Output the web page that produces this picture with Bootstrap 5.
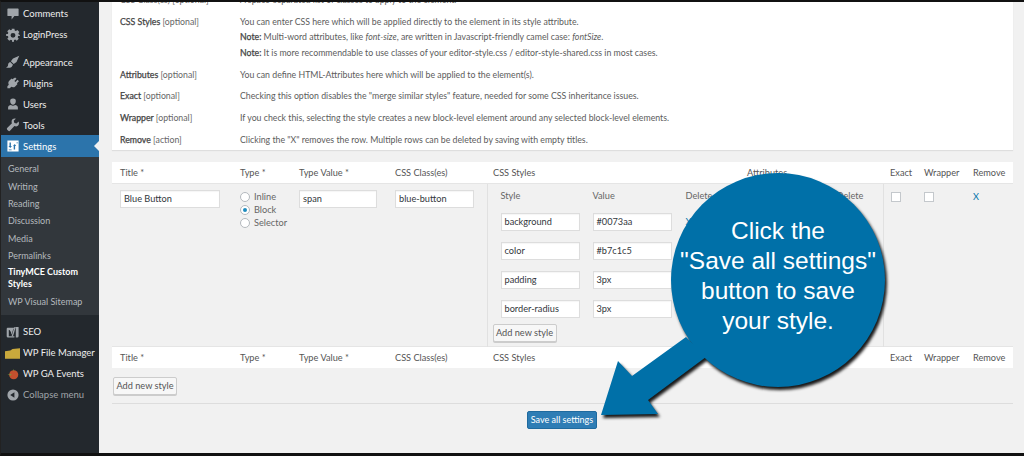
<!DOCTYPE html>
<html lang="en"><head><meta charset="utf-8"><title>TinyMCE Custom Styles</title>
<link href="https://cdn.jsdelivr.net/npm/bootstrap@5.3.0/dist/css/bootstrap.min.css" rel="stylesheet">
<style>
html,body{height:100%;overflow:hidden}
body{font-family:Lato,"Open Sans","Liberation Sans",sans-serif;font-size:9.2px;line-height:13px;color:#444;background:#f1f1f1}
.frame{width:1024px;height:456px;border-top:2px solid #111;border-bottom:3px solid #111;border-left:1px solid #222;position:relative;overflow:hidden}
.side{width:98px;background:#23282d;color:#eee;flex:none;padding-top:1px}
.menu-i{height:21px;padding-left:22px;position:relative;display:flex;align-items:center;font-size:9.5px;white-space:nowrap}
.menu-i svg{position:absolute;left:5px;top:3.5px;width:14px;height:14px;fill:#a0a5aa}
.menu-i.gap1{margin-top:6.5px}
.menu-i.gap2{margin-top:6px}
.menu-i.dim{color:#a0a5aa}
.menu-i.on{background:#2c74ab;color:#fff;height:22px;margin-top:-.5px}
.menu-i.on svg{fill:#fff}
.menu-i.on::after{content:"";position:absolute;right:0;top:6px;border:5px solid transparent;border-right-color:#f1f1f1;border-left:0}
.menu-i svg.bigger{left:4px;width:15px;height:15px}
.sub{background:#32373c;padding:3px 0 5px;color:#b4b9be;font-size:9px}
.sub div{padding:2.2px 7px;line-height:13px}
.sub .cur{color:#fff;font-weight:700;line-height:12px}
.main{flex:1;min-width:0;padding:0 11px 0 13px}
.panel1{background:#fff;box-shadow:0 1px 1px rgba(0,0,0,.08);margin-top:-9px;height:157px;color:#5c5c5c;font-size:8.75px}
.opt{display:flex;padding:0 8px}
.opt .k{width:120px;flex:none;color:#666}
.opt b{font-weight:400;color:#444;-webkit-text-stroke:.25px #444}
.opt p{margin:0 0 2.2px;line-height:13.3px}
.opt.mb9{margin-bottom:8.7px}
.opt.mb7{margin-bottom:6.6px}
.gridt{margin-top:12px;width:901px;table-layout:fixed;border-collapse:collapse;background:#f1f1f1}
.gridt th{background:#fff;font-weight:400;height:21.5px;padding:0 0 0 8px;color:#555;white-space:nowrap;overflow:visible;vertical-align:middle}
.gridt th.nar{padding-left:7px}
.gridt th.stylesh{padding-left:6px}
.gridt thead th{border-bottom:1px solid #e5e5e5}
.gridt tfoot th{border-top:1px solid #e5e5e5}
.gridt td{vertical-align:top;padding:6px 0 0 8px;height:163px}
.gridt td.nar{padding-left:7px}
.gridt td.radc{padding-top:6px}
.gridt td.ss{border-left:1px solid #e1e1e1;border-right:1px solid #e1e1e1;padding:0 0 0 5px}
.fld{display:block;height:18px;background:#fff;border:1px solid #ddd;box-shadow:inset 0 1px 1px rgba(0,0,0,.04);padding:0 3px;line-height:16px;color:#32373c}
.w100{width:100px}.w78{width:78px}.w79{width:79px}
.radline{height:13px;display:flex;align-items:center;gap:4px;color:#666}
.rad{width:10px;height:10px;border-radius:50%;background:#fff;border:1px solid #b4b9be;display:flex;align-items:center;justify-content:center;flex:none}
.rad i{width:4px;height:4px;border-radius:50%;background:#1e8cbe}
.chk{display:block;width:10px;height:10px;background:#fff;border:1px solid #c4c8cc;margin-top:2px}
.lnk{color:#0073aa;line-height:13px;display:block}
.subg{display:grid;grid-template-columns:92px 93px 61px 90px 1fr;padding-left:8px;color:#666;padding-top:5px;height:29px}
.subf{display:grid;grid-template-columns:92px 93px 61px;padding-left:8px;height:29px;align-items:start}
.subf .fld{width:79px}
.xmark{color:#0073aa;padding-top:2px}
.hattr{width:254px}
.wbtn{display:inline-block;width:64px;height:18px;border:1px solid #ccc;background:#f7f7f7;box-shadow:0 1px 0 #ccc;border-radius:2px;line-height:16px;text-align:center;color:#555}
.addin{margin-top:-5px}
.addout{margin:9px 0 0 1px;line-height:0}
.hrl{border-top:1px solid #ddd;margin:8px 0 7px;width:901px}
.savebtn{width:70px;height:18px;background:#2e7db5;border:1px solid #1f6a9e;border-radius:2px;color:#fff;font-size:9px;line-height:16px;text-align:center;margin-left:415px}
.callout{position:absolute;left:590px;top:165px;width:310px;height:265px;pointer-events:none}
.callout svg{display:block;filter:drop-shadow(2px 3px 1.5px rgba(0,0,0,.9))}
.calltxt{position:absolute;left:67px;top:48.500px;width:240px;text-align:center;font-family:"Liberation Sans",Arial,sans-serif;font-size:24.500px;line-height:30.300px;color:#fff}
</style></head><body>
<div class="frame d-flex">
<nav class="side">
<div class="menu-i"><svg viewBox="0 0 20 20"><path d="M3 2h14a1 1 0 0 1 1 1v9a1 1 0 0 1-1 1h-5l-4 5v-5H3a1 1 0 0 1-1-1V3a1 1 0 0 1 1-1z"/></svg>Comments</div>
<div class="menu-i"><svg viewBox="0 0 20 20"><path d="M8 1h4l.5 2.600 1.600.7 2.200-1.500 2.800 2.800-1.500 2.200.7 1.600L20 10v1l-2.600.5-.7 1.600 1.500 2.200-2.800 2.800-2.200-1.500-1.600.7L11 20H9l-.5-2.600-1.600-.7-2.200 1.500-2.800-2.800 1.500-2.200-.7-1.600L0 11V9l2.600-.5.7-1.600L1.800 4.600l2.800-2.800 2.200 1.500 1.600-.7zM10 7a3.500 3.500 0 1 0 0 7 3.500 3.500 0 0 0 0-7z" fill-rule="evenodd"/></svg>LoginPress</div>
<div class="menu-i gap1"><svg viewBox="0 0 20 20"><path d="M19 1l-9 4-3 4 4 4 4-3zM6 10l4 4-2 3c-2 1.500-5 1.500-8 1 2-1 3-2 3-4 0-2 1-3 3-4z"/></svg>Appearance</div>
<div class="menu-i"><svg viewBox="0 0 20 20"><path d="M13 2l2 2-3 3 1.500 1.500 3-3 2 2-3 3 1 1-3 3c-2 2-4 2-6 1l-2 2H2v-3l2-2c-1-2-1-4 1-6l3-3 1 1z"/></svg>Plugins</div>
<div class="menu-i"><svg viewBox="0 0 20 20"><path d="M10 2a4 4 0 0 1 4 4.500C14 9 12 11 10 11S6 9 6 6.500A4 4 0 0 1 10 2zM3 18v-3c0-2 2-3 4-3.500 2 1.500 4 1.500 6 0 2 .5 4 1.500 4 3.500v3z"/></svg>Users</div>
<div class="menu-i"><svg viewBox="0 0 20 20"><path d="M18 5l-3 3-3-1-1-3 3-3c-3-1-6 1-6 4 0 1 0 2 .5 2.500L2 14c-1 1-1 2 0 3l1 1c1 1 2 1 3 0l6-6.500c.5.500 1.500.5 2.500.5 3 0 5-3 3.500-7z"/></svg>Tools</div>
<div class="menu-i on"><svg viewBox="0 0 20 20"><path fill-rule="evenodd" d="M2 2h16v16H2zM5 5v5H3.500l2.500 3 2.500-3H7V5zm6 10h2V10h1.500L12.500 7 10 10h1zM15 5h2v1h-2zM4 15h4v1H4z"/></svg>Settings</div>
<div class="sub"><div>General</div><div>Writing</div><div>Reading</div><div>Discussion</div><div>Media</div><div>Permalinks</div><div class="cur">TinyMCE Custom<br>Styles</div><div>WP Visual Sitemap</div></div>
<div class="menu-i gap2"><svg viewBox="0 0 20 20"><path d="M2 4h10l-2 3-2 7-1-4-2-3H4v9h8v2H3a2 2 0 0 1-2-2V5zM14 3h4v13a2 2 0 0 1-2 2h-2z"/><path d="M12 3h2l-4 13H8z"/></svg>SEO</div>
<div class="menu-i"><svg class="bigger" viewBox="0 0 20 20"><path fill="#c9a93c" d="M0 7l7-1 3-2 10-1v14H0z"/></svg>WP File Manager</div>
<div class="menu-i"><svg viewBox="0 0 20 20"><circle cx="11" cy="11" r="6.500" fill="#c2502e"/><path fill="#7a9a3c" d="M2 11l6-1-1 2zM10 3l2 2-1 1z"/></svg>WP GA Events</div>
<div class="menu-i dim"><svg viewBox="0 0 20 20"><path fill-rule="evenodd" d="M10 2a8 8 0 1 1 0 16 8 8 0 0 1 0-16zm2 4l-6 4 6 4z"/></svg>Collapse menu</div>
</nav>
<main class="main">
<section class="panel1">
<div class="opt mb9"><div class="k">CSS Class(es) [optional]</div><div>A space-separated list of classes to apply to the element.</div></div>
<div class="opt mb7"><div class="k"><b>CSS Styles</b> [optional]</div><div><p>You can enter CSS here which will be applied directly to the element in its style attribute.</p><p><b>Note:</b> Multi-word attributes, like <i>font-size</i>, are written in Javascript-friendly camel case: <i>fontSize</i>.</p><p><b>Note:</b> It is more recommendable to use classes of your editor-style.css / editor-style-shared.css in most cases.</p></div></div>
<div class="opt mb9"><div class="k"><b>Attributes</b> [optional]</div><div>You can define HTML-Attributes here which will be applied to the element(s).</div></div>
<div class="opt mb9"><div class="k"><b>Exact</b> [optional]</div><div>Checking this option disables the "merge similar styles" feature, needed for some CSS inheritance issues.</div></div>
<div class="opt mb9"><div class="k"><b>Wrapper</b> [optional]</div><div>If you check this, selecting the style creates a new block-level element around any selected block-level elements.</div></div>
<div class="opt"><div class="k"><b>Remove</b> [action]</div><div>Clicking the "X" removes the row. Multiple rows can be deleted by saving with empty titles.</div></div>
</section>
<table class="gridt">
<colgroup><col style="width:120px"><col style="width:59px"><col style="width:96px"><col style="width:100px"><col style="width:396px"><col style="width:34px"><col style="width:49px"><col style="width:47px"></colgroup>
<thead><tr><th>Title *</th><th>Type *</th><th>Type Value *</th><th>CSS Class(es)</th><th class="stylesh"><div class="d-flex"><span class="hattr">CSS Styles</span><span>Attributes</span></div></th><th class="nar">Exact</th><th class="nar">Wrapper</th><th class="nar">Remove</th></tr></thead>
<tbody><tr>
<td><span class="fld w100">Blue Button</span></td>
<td class="radc"><div class="radline"><span class="rad"></span>Inline</div><div class="radline"><span class="rad"><i></i></span>Block</div><div class="radline"><span class="rad"></span>Selector</div></td>
<td><span class="fld w78">span</span></td>
<td><span class="fld w79">blue-button</span></td>
<td class="ss">
<div class="subg"><span>Style</span><span>Value</span><span>Delete</span><span>Attribute</span><span>Delete</span></div>
<div class="subf"><span class="fld">background</span><span class="fld">#0073aa</span><span class="xmark">X</span></div>
<div class="subf"><span class="fld">color</span><span class="fld">#b7c1c5</span><span class="xmark">X</span></div>
<div class="subf"><span class="fld">padding</span><span class="fld">3px</span><span class="xmark">X</span></div>
<div class="subf"><span class="fld">border-radius</span><span class="fld">3px</span><span class="xmark">X</span></div>
<div class="addin"><span class="wbtn">Add new style</span></div>
</td>
<td class="nar"><span class="chk"></span></td><td class="nar"><span class="chk"></span></td><td class="nar"><span class="lnk">X</span></td>
</tr></tbody>
<tfoot><tr><th>Title *</th><th>Type *</th><th>Type Value *</th><th>CSS Class(es)</th><th class="stylesh">CSS Styles</th><th class="nar">Exact</th><th class="nar">Wrapper</th><th class="nar">Remove</th></tr></tfoot>
</table>
<div class="addout"><span class="wbtn">Add new style</span></div>
<div class="hrl"></div>
<div class="savebtn">Save all settings</div>
</main>
<div class="callout">
<svg width="310" height="265" viewBox="590 165 310 265"><circle cx="777" cy="278" r="107" fill="#0070a8"/><path fill="#0070a8" d="M685 335L631 374 617 359 600 413 657 412 647 398 705 355z"/></svg>
<div class="calltxt">Click the<br>"Save all settings"<br>button to save<br>your style.</div>
</div>
</div>
<script src="https://cdn.jsdelivr.net/npm/bootstrap@5.3.0/dist/js/bootstrap.bundle.min.js"></script>
</body></html>
